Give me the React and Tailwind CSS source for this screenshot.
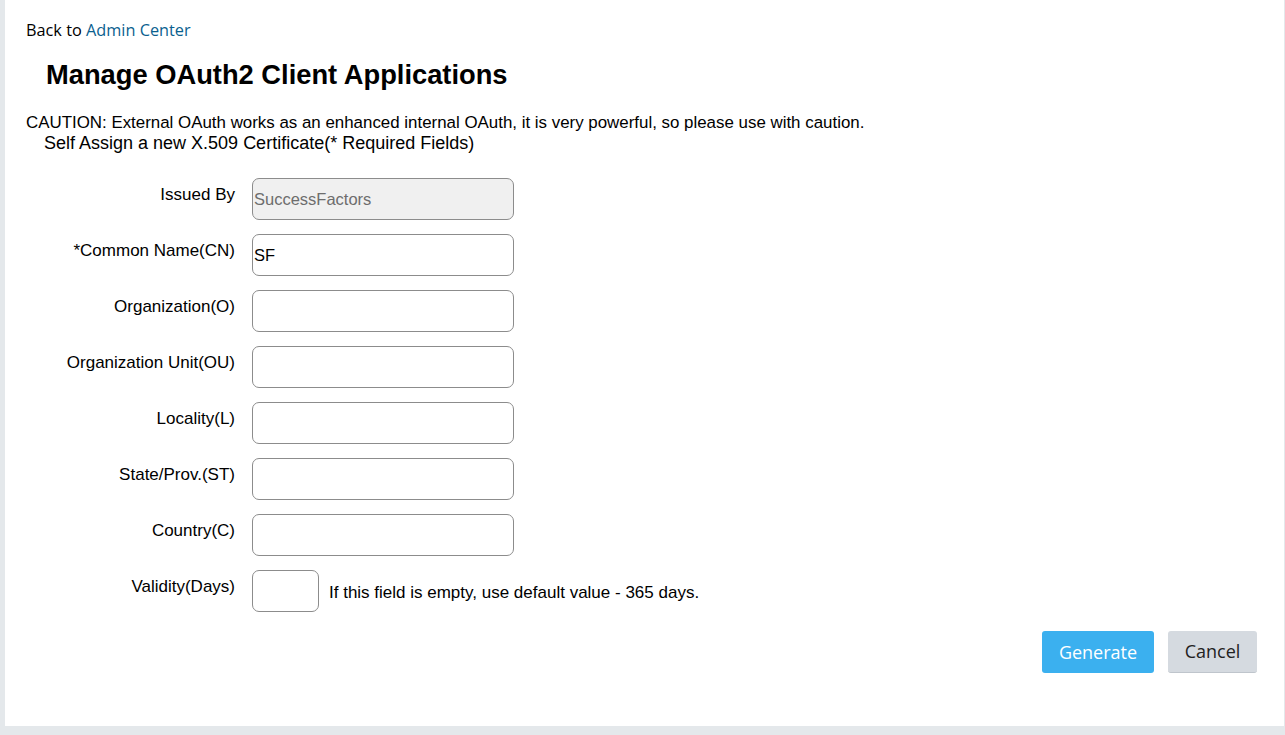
import React from "react";

const fields = [
  { label: "Issued By", value: "SuccessFactors", disabled: true },
  { label: "*Common Name(CN)", value: "SF" },
  { label: "Organization(O)", value: "" },
  { label: "Organization Unit(OU)", value: "" },
  { label: "Locality(L)", value: "" },
  { label: "State/Prov.(ST)", value: "" },
  { label: "Country(C)", value: "" },
];

function FieldRow({ label, value, disabled }) {
  return (
    <div className="flex items-start h-[56px]">
      <label className="w-[230px] text-right pt-[4px] text-[17px] text-black">{label}</label>
      <input
        readOnly
        defaultValue={value}
        disabled={disabled}
        className={`ml-[17px] w-[262px] h-[42px] rounded-[7px] border border-[#8c8c8c] px-[1px] text-[16.5px] outline-none ${
          disabled ? "bg-[#f0f0f0] text-[#6d6d6d]" : "bg-white text-black"
        }`}
      />
    </div>
  );
}

export default function App() {
  return (
    <div className="w-[1285px] h-[735px] bg-[#e4e8eb] overflow-hidden" style={{ fontFamily: '"Liberation Sans", Arial, sans-serif' }}>
      <div className="ml-[5px] w-[1279px] h-[726px] bg-white">
        <div className="pt-[18px] pl-[21px] text-[16.3px] text-black" style={{ fontFamily: '"Open Sans", sans-serif' }}>
          Back to <a className="text-[#0b5f8f]">Admin Center</a>
        </div>
        <h1 className="mt-[18px] ml-[41px] text-[27.3px] font-bold text-black leading-[30px]">
          Manage OAuth2 Client Applications
        </h1>
        <p className="mt-[22px] ml-[21px] text-[16.9px] leading-[21px] text-black">
          CAUTION: External OAuth works as an enhanced internal OAuth, it is very powerful, so please use with caution.
        </p>
        <p className="ml-[39px] text-[18px] leading-[21px] text-black">
          Self Assign a new X.509 Certificate(* Required Fields)
        </p>

        <div className="mt-[24px]">
          {fields.map((f) => (
            <FieldRow key={f.label} {...f} />
          ))}
          <div className="flex items-start">
            <label className="w-[230px] text-right pt-[4px] text-[17px] text-black">Validity(Days)</label>
            <input
              readOnly
              className="ml-[17px] w-[67px] h-[42px] rounded-[7px] border border-[#8c8c8c] bg-white outline-none"
            />
            <span className="ml-[10px] pt-[10px] text-[17px] text-black">
              If this field is empty, use default value - 365 days.
            </span>
          </div>
        </div>

        <div className="flex justify-end gap-[14px] mt-[19px] pr-[27px]" style={{ fontFamily: '"Open Sans", sans-serif' }}>
          <button className="w-[112px] h-[42px] rounded-[3px] bg-[#3bb0ef] text-white text-[18px]">Generate</button>
          <button className="w-[89px] h-[42px] rounded-[3px] bg-[#d5dae0] border-b border-[#bfc5cc] text-[#222] text-[18px]">Cancel</button>
        </div>
      </div>
    </div>
  );
}
